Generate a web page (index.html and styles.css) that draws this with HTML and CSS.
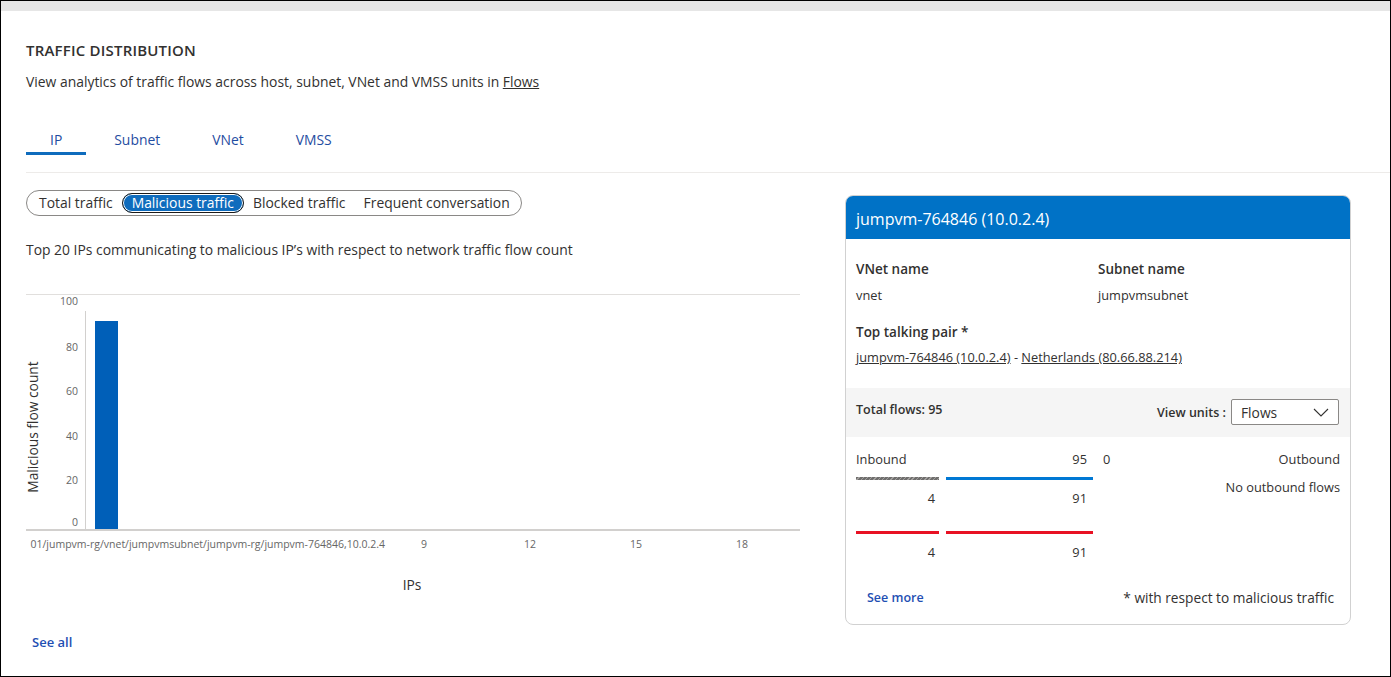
FILE: index.html
```html
<!DOCTYPE html>
<html lang="en">
<head>
<meta charset="utf-8">
<title>Traffic distribution</title>
<link rel="stylesheet" href="styles.css">
</head>
<body>
<div class="frame">
  <div class="topbar"></div>
  <div class="page">
    <h2 class="title">TRAFFIC DISTRIBUTION</h2>
    <p class="subtitle">View analytics of traffic flows across host, subnet, VNet and VMSS units in <a class="ulink">Flows</a></p>
    <div class="tabs">
      <div class="tab active">IP</div>
      <div class="tab">Subnet</div>
      <div class="tab">VNet</div>
      <div class="tab">VMSS</div>
    </div>
    <div class="divider"></div>
    <div class="main">
      <div class="left">
        <div class="pills">
          <span class="pill">Total traffic</span>
          <span class="pill selected">Malicious traffic</span>
          <span class="pill">Blocked traffic</span>
          <span class="pill">Frequent conversation</span>
        </div>
        <p class="chart-desc">Top 20 IPs communicating to malicious IP’s with respect to network traffic flow count</p>
        <div class="chart-wrap">
          <div class="y-title">Malicious flow count</div>
          <svg class="chart" width="774" height="315" viewBox="0 0 774 315">
            <defs>
              <clipPath id="xclip"><rect x="1" y="252" width="380" height="24"/></clipPath>
            </defs>
            <line x1="0" y1="14.5" x2="774" y2="14.5" stroke="#e1dfdd" stroke-width="1"/>
            <line x1="59.5" y1="31" x2="59.5" y2="250" stroke="#d2d0ce" stroke-width="1"/>
            <rect x="69" y="41" width="23" height="208" fill="#005fb8"/>
            <line x1="0" y1="250" x2="774" y2="250" stroke="#d2d0ce" stroke-width="2"/>
            <g class="ytick" text-anchor="end">
              <text x="52" y="25">100</text>
              <text x="52" y="71">80</text>
              <text x="52" y="115">60</text>
              <text x="52" y="160">40</text>
              <text x="52" y="204">20</text>
              <text x="52" y="246">0</text>
            </g>
            <g class="xtick">
              <text x="359" y="268" text-anchor="end" clip-path="url(#xclip)">01/jumpvm-rg/vnet/jumpvmsubnet/jumpvm-rg/jumpvm-764846,10.0.2.4</text>
              <text x="398" y="268" text-anchor="middle">9</text>
              <text x="504" y="268" text-anchor="middle">12</text>
              <text x="610" y="268" text-anchor="middle">15</text>
              <text x="716" y="268" text-anchor="middle">18</text>
            </g>
            <text class="axis-title" x="386" y="310" text-anchor="middle">IPs</text>
          </svg>
        </div>
        <a class="see-all">See all</a>
      </div>

      <div class="card">
        <div class="card-head">jumpvm-764846 (10.0.2.4)</div>
        <div class="card-body">
          <div class="info">
            <div class="info-col">
              <div class="label">VNet name</div>
              <div class="value">vnet</div>
            </div>
            <div class="info-col">
              <div class="label">Subnet name</div>
              <div class="value">jumpvmsubnet</div>
            </div>
          </div>
          <div class="label pair-label">Top talking pair *</div>
          <div class="value pair"><a class="ulink">jumpvm-764846 (10.0.2.4)</a> - <a class="ulink">Netherlands (80.66.88.214)</a></div>
        </div>
        <div class="band">
          <div class="total">Total flows: 95</div>
          <div class="units">
            <span class="units-label">View units :</span>
            <div class="select">
              <span>Flows</span>
              <svg class="chev" width="16" height="9" viewBox="0 0 16 9"><path d="M1 1 L8 8 L15 1" fill="none" stroke="#323130" stroke-width="1.1"/></svg>
            </div>
          </div>
        </div>
        <div class="card-body">
          <div class="flows">
            <div class="inbound">
              <div class="cell">Inbound</div>
              <div class="cell num">95</div>
              <div class="seg seg-gray"><div class="num n1">4</div></div>
              <div class="seg seg-blue"><div class="num">91</div></div>
              <div class="seg seg-red"><div class="num n1">4</div></div>
              <div class="seg seg-red"><div class="num">91</div></div>
            </div>
            <div class="outbound">
              <div class="out-head"><span>0</span><span>Outbound</span></div>
              <div class="no-out">No outbound flows</div>
            </div>
          </div>
          <div class="card-foot">
            <a class="see-more">See more</a>
            <span class="note">* with respect to malicious traffic</span>
          </div>
        </div>
      </div>
    </div>
  </div>
</div>
</body>
</html>
```

FILE: styles.css
```css
* { box-sizing: border-box; }

html, body {
  margin: 0;
  padding: 0;
  background: #ffffff;
}

body {
  font-family: "Open Sans", "Liberation Sans", Arial, sans-serif;
  font-size: 13.9px;
  color: #323130;
}

.frame {
  width: 1391px;
  height: 677px;
  border: 1px solid #000000;
  overflow: hidden;
}

.topbar {
  height: 10px;
  background: #e6e6e6;
}

.page {
  padding-left: 25px;
}

.title {
  margin: 29px 0 0;
  font-size: 15px;
  letter-spacing: 0.2px;
  line-height: 20px;
  font-weight: 600;
  color: #323130;
}

.subtitle {
  margin: 12px 0 0;
  line-height: 20px;
}

.ulink {
  color: #323130;
  text-decoration: underline;
}

.tabs {
  display: flex;
  gap: 4px;
  margin-top: 34px;
}

.tab {
  padding: 4px 24px 2px;
  line-height: 20px;
  border-bottom: 3px solid transparent;
  color: #1f4da1;
}

.tab.active {
  border-bottom-color: #0f6cbd;
}

.divider {
  margin-top: 17px;
  height: 1px;
  background: #edebe9;
}

.main {
  display: flex;
  align-items: flex-start;
}

.left {
  width: 774px;
  display: flex;
  flex-direction: column;
  align-items: flex-start;
}

.pills {
  margin-top: 17px;
  display: inline-flex;
  border: 1px solid #8a8886;
  border-radius: 13px;
  padding: 2px;
}

.pill {
  padding: 0 9px;
  line-height: 20px;
  height: 20px;
  color: #323130;
  white-space: nowrap;
}

.pill:first-child {
  padding-left: 10px;
}

.pill.selected {
  background: #0f6cbd;
  color: #ffffff;
  border: 1px solid #1b1a19;
  border-radius: 10px;
  box-shadow: inset 0 0 0 1px #ffffff;
  line-height: 18px;
}

.chart-desc {
  margin: 24px 0 0;
  line-height: 20px;
}

.chart-wrap {
  position: relative;
  margin-top: 20px;
  width: 774px;
  height: 315px;
}

.y-title {
  position: absolute;
  left: 7px;
  top: 147px;
  transform: translate(-50%, -50%) rotate(-90deg);
  white-space: nowrap;
  line-height: 18px;
  font-size: 13.8px;
}

.chart {
  display: block;
  overflow: visible;
}

.ytick text, .xtick text {
  font-family: "Open Sans", "Liberation Sans", Arial, sans-serif;
  font-size: 10.5px;
  fill: #666666;
}

.axis-title {
  font-family: "Open Sans", "Liberation Sans", Arial, sans-serif;
  font-size: 13.8px;
  fill: #323130;
}

.see-all {
  margin-top: 37px;
  margin-left: 6px;
  line-height: 20px;
  font-size: 13px;
  font-weight: 600;
  color: #1f4fb3;
}

.card {
  margin-left: 45px;
  margin-top: 22px;
  width: 506px;
  border: 1px solid #d1d1d1;
  border-radius: 8px;
  overflow: hidden;
  background: #ffffff;
}

.card-head {
  height: 43px;
  display: flex;
  align-items: center;
  padding-left: 10px;
  padding-top: 2px;
  background: #0072c6;
  color: #ffffff;
  font-size: 16px;
}

.card-body {
  padding: 0 10px;
}

.info {
  display: flex;
  margin-top: 20px;
}

.info-col {
  width: 242px;
}

.label {
  line-height: 20px;
  font-weight: 600;
  font-size: 13.5px;
}

.pair-label {
  margin-top: 18px;
}

.value {
  margin-top: 7px;
  font-size: 12.8px;
  line-height: 18px;
}

.pair {
  margin-top: 6px;
}

.band {
  margin-top: 22px;
  height: 49px;
  background: #f5f5f5;
  padding: 11px 11px 0 10px;
  display: flex;
  justify-content: space-between;
  align-items: flex-start;
}

.total {
  margin-top: 2px;
  font-size: 12.5px;
  line-height: 18px;
  font-weight: 600;
}

.units {
  display: flex;
  align-items: center;
  gap: 5px;
}

.units-label {
  font-size: 12.5px;
  font-weight: 600;
}

.select {
  width: 108px;
  height: 26px;
  border: 1px solid #8a8886;
  border-radius: 2px;
  background: #ffffff;
  display: flex;
  align-items: center;
  justify-content: space-between;
  padding: 0 9px 0 9px;
  font-size: 13.8px;
}

.chev {
  display: block;
}

.flows {
  display: flex;
  margin-top: 13px;
}

.inbound {
  display: grid;
  grid-template-columns: 83px 147px;
  column-gap: 7px;
  font-size: 12.8px;
}

.cell {
  line-height: 18px;
}

.num {
  line-height: 18px;
  text-align: right;
  padding-right: 6px;
}

.num.n1 {
  padding-right: 4px;
}

.seg {
  margin-top: 9px;
}

.seg + .seg + .seg {
  margin-top: 24px;
}

.seg::before {
  content: "";
  display: block;
  height: 3px;
  margin-bottom: 9px;
}

.seg-gray::before {
  background: repeating-linear-gradient(135deg, #6f6e6d 0 2px, #a19f9d 2px 3px);
}

.seg-blue::before {
  background: #0078d4;
}

.seg-red::before {
  background: #e81123;
}

.outbound {
  flex: 1;
  margin-left: 10px;
  font-size: 12.8px;
}

.out-head {
  display: flex;
  justify-content: space-between;
  line-height: 18px;
}

.no-out {
  margin-top: 10px;
  text-align: right;
  line-height: 18px;
}

.card-foot {
  margin-top: 27px;
  padding: 0 6px 16px 11px;
  display: flex;
  justify-content: space-between;
  line-height: 20px;
}

.see-more {
  font-size: 12.5px;
  font-weight: 600;
  color: #1f4fb3;
}

.note {
  font-size: 13.7px;
}
```
